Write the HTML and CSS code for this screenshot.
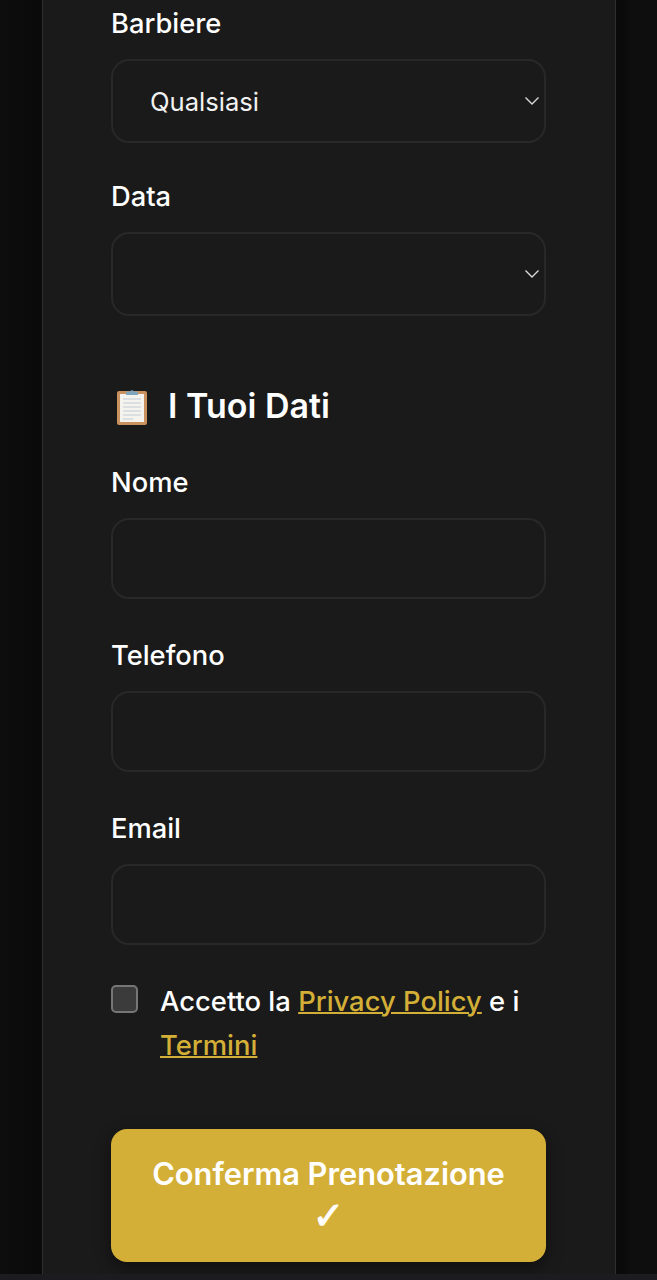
FILE: index.html
```html
<!DOCTYPE html>
<html lang="it">
<head>
    <meta charset="UTF-8">
    <meta name="viewport" content="width=device-width, initial-scale=1.0">
    <title>Prenotazione</title>
    <link rel="stylesheet" href="styles.css">
</head>
<body>
    <main class="panel">
        <form class="booking-form">
            <div class="form-group">
                <label for="barbiere">Barbiere</label>
                <div class="select-wrap">
                    <select id="barbiere" name="barbiere">
                        <option>Qualsiasi</option>
                    </select>
                    <svg class="chevron" viewBox="0 0 16 10" aria-hidden="true"><path d="M1.5 1.5 8 8l6.5-6.5"/></svg>
                </div>
            </div>
            <div class="form-group">
                <label for="data">Data</label>
                <div class="select-wrap">
                    <select id="data" name="data">
                        <option></option>
                    </select>
                    <svg class="chevron" viewBox="0 0 16 10" aria-hidden="true"><path d="M1.5 1.5 8 8l6.5-6.5"/></svg>
                </div>
            </div>

            <h2 class="section-title">
                <!-- clipboard icon -->
                <svg class="clipboard" viewBox="0 0 38 40" aria-hidden="true">
                    <rect x="4" y="5" width="30" height="34" rx="2" fill="#c9925f"/>
                    <rect x="7" y="8" width="24" height="28" fill="#f4f3ee"/>
                    <path d="M10 13h18M10 17h18M10 21h18M10 25h18M10 29h18M10 33h10" stroke="#c3ccd4" stroke-width="1.2"/>
                    <path d="M13 9V5.500h4a2.200 2.200 0 0 1 4 0h4V9z" fill="#7fa6bd"/>
                </svg>
                <span>I Tuoi Dati</span>
            </h2>

            <div class="form-group">
                <label for="nome">Nome</label>
                <input type="text" id="nome" name="nome">
            </div>
            <div class="form-group">
                <label for="telefono">Telefono</label>
                <input type="tel" id="telefono" name="telefono">
            </div>
            <div class="form-group">
                <label for="email">Email</label>
                <input type="email" id="email" name="email">
            </div>

            <div class="consent">
                <input type="checkbox" id="privacy" name="privacy">
                <label for="privacy">Accetto la <a href="#">Privacy Policy</a> e i <a href="#">Termini</a></label>
            </div>

            <button type="submit">Conferma Prenotazione <span class="tick">✓</span></button>
        </form>
    </main>
    <div class="bottom-bar"></div>
</body>
</html>
```

FILE: styles.css
```css
html, body { margin: 0; height: 1280px; overflow: hidden; }
body { background: linear-gradient(90deg, #0d0d0d 0, #0a0a0a 40px, #0a0a0a 622px, #0e0e0e 630px); font-family: Inter, "Liberation Sans", sans-serif; color: #fff; }

.panel { box-sizing: border-box; width: 574px; height: 1274px; margin-left: 42px; padding: 0 69px 0 68px; background: #1a1a1a; border-left: 1px solid #2f2f2f; border-right: 1px solid #2f2f2f; }
.bottom-bar { height: 6px; background: #1b1b20; }

.form-group { margin-bottom: 30px; }
.form-group > label { display: block; margin-bottom: 12px; font-size: 27.3px; line-height: 47px; font-weight: 500; }

select, input[type="text"], input[type="tel"], input[type="email"] { display: block; box-sizing: border-box; width: 100%; background: #1a1a1a; border: 2px solid #282828; border-radius: 18px; color: #f2f2f2; font-family: inherit; outline: none; }
select { appearance: none; height: 84px; padding: 0 37px; font-size: 25.6px; }
input[type="text"], input[type="tel"], input[type="email"] { height: 81px; padding: 0 20px; font-size: 25.6px; margin-bottom: 33px; }

.select-wrap { position: relative; }
.chevron { position: absolute; right: 6px; top: 37px; width: 16px; height: 10px; fill: none; stroke: #d8d8d8; stroke-width: 1.4; }

.section-title { display: flex; align-items: center; gap: 17px; margin: 68px 0 31px; height: 44px; font-size: 34px; font-weight: 600; line-height: 44px; }
.clipboard { width: 38px; height: 40px; margin-left: 2px; }

.section-title ~ .form-group { margin-bottom: 0; }

.consent { display: flex; gap: 22px; padding-top: 1px; }
.consent input { appearance: none; flex: none; box-sizing: border-box; width: 27px; height: 28px; margin: 6px 0 0; background: #3b3b3b; border: 2px solid #767676; border-radius: 5px; }
.consent label { font-size: 27.4px; font-weight: 500; line-height: 44px; }
.consent a { color: #d4af37; text-decoration-thickness: 2px; }

button { display: block; width: 100%; height: 133px; margin-top: 62px; padding: 16px 30px; background: #d4af37; color: #fff; border: none; border-radius: 16px; font-family: inherit; font-size: 30.8px; font-weight: 600; line-height: 42px; box-shadow: 0 5px 16px rgba(0, 0, 0, 0.45); cursor: pointer; }
.tick { font-family: "DejaVu Sans", sans-serif; font-size: 38px; -webkit-text-stroke: 1px #fff; }
```
